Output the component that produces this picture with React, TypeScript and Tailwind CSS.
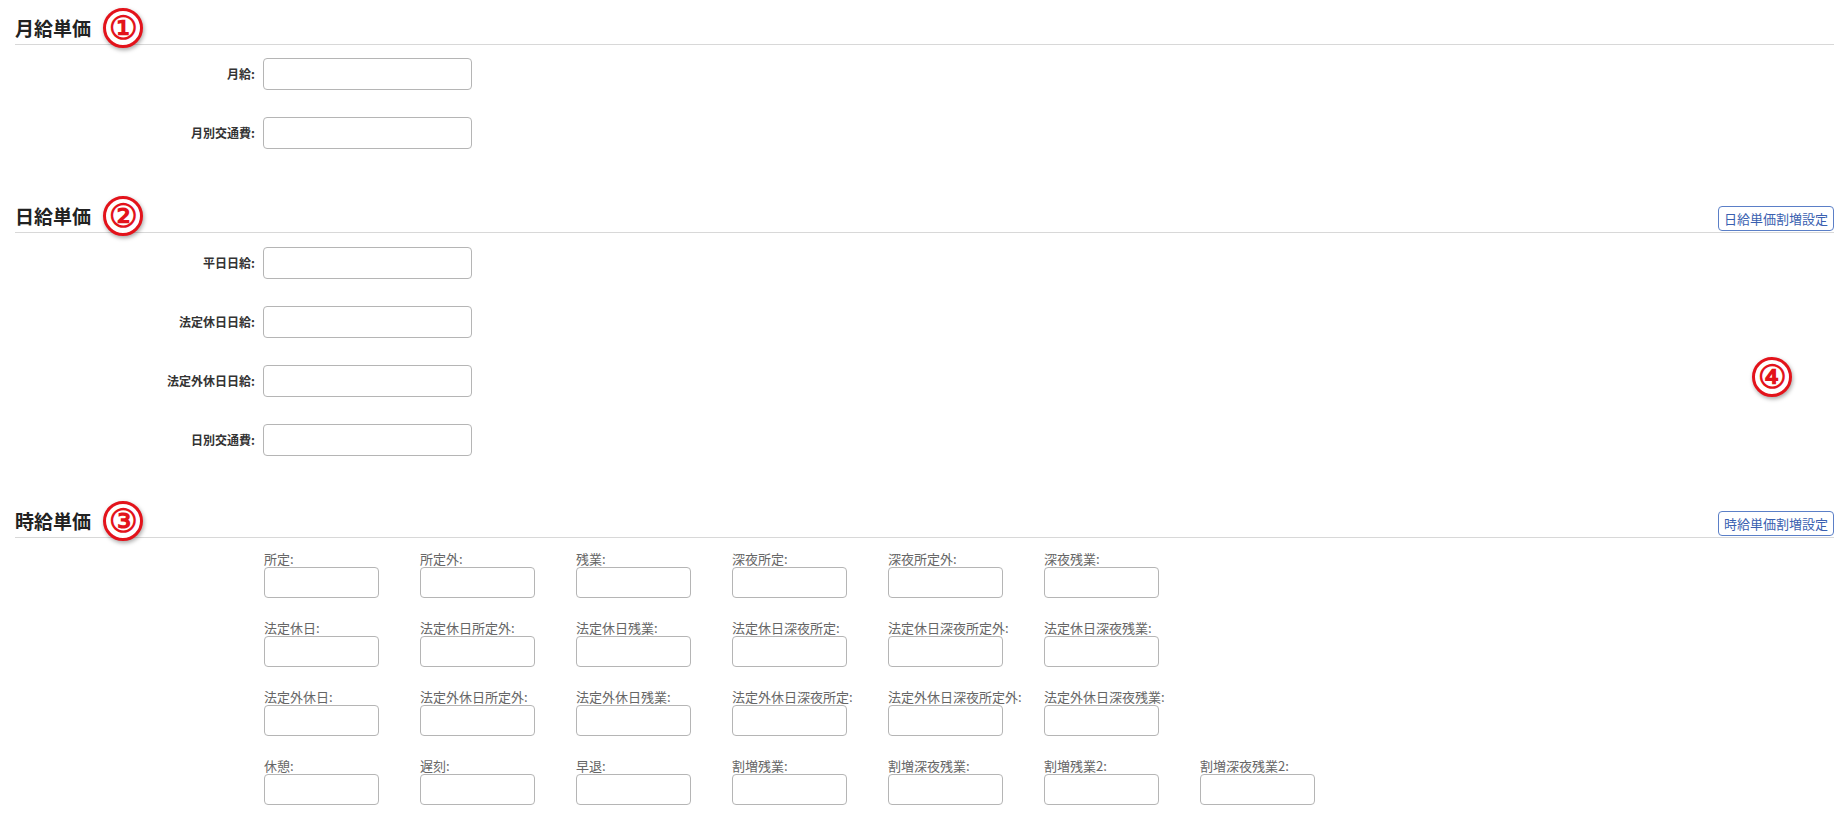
import React from "react";

const font = { fontFamily: '"Noto Sans CJK JP", "Noto Sans", sans-serif' };

function Badge({ n, className }: { n: string; className: string }) {
  return (
    <div
      className={`absolute w-[40px] h-[40px] rounded-full bg-white border-[3px] border-[#e3131b] flex items-center justify-center text-[#e3131b] text-[32px] font-bold leading-none shadow-[1px_2px_4px_rgba(0,0,0,0.35)] ${className}`}
      style={{ fontFamily: '"Liberation Sans", sans-serif' }}
    >
      {n}
    </div>
  );
}

function Header({ title, badge, button }: { title: string; badge: string; button?: string }) {
  return (
    <div className="relative flex items-end justify-between border-b border-[#d8d8d8] h-[45px] pb-[4px]">
      <div className="relative text-[19px] font-bold text-[#222] leading-[24px]">
        {title}
        <Badge n={badge} className="left-[88px] -top-[8px]" />
      </div>
      {button && (
        <button className="mb-[-3px] px-[5px] h-[25px] border border-[#5b7fc7] rounded-[4px] text-[13px] text-[#3a5fb0] bg-white leading-none">
          {button}
        </button>
      )}
    </div>
  );
}

function Row({ label }: { label: string }) {
  return (
    <div className="flex items-center h-[32px] mb-[27px]">
      <div className="w-[248px] text-right text-[12px] font-bold text-[#333] pr-[8px]">{label}</div>
      <input className="w-[209px] h-[32px] border border-[#b5b5b5] rounded-[4px] bg-white" />
    </div>
  );
}

const hourly = [
  ["所定:", "所定外:", "残業:", "深夜所定:", "深夜所定外:", "深夜残業:"],
  ["法定休日:", "法定休日所定外:", "法定休日残業:", "法定休日深夜所定:", "法定休日深夜所定外:", "法定休日深夜残業:"],
  ["法定外休日:", "法定外休日所定外:", "法定外休日残業:", "法定外休日深夜所定:", "法定外休日深夜所定外:", "法定外休日深夜残業:"],
  ["休憩:", "遅刻:", "早退:", "割増残業:", "割増深夜残業:", "割増残業2:", "割増深夜残業2:"],
];

export default function App() {
  return (
    <div className="relative w-[1844px] h-[820px] bg-white overflow-hidden pl-[15px] pr-[10px]" style={font}>
      <Header title="月給単価" badge="①" />
      <div className="mt-[13px]">
        <Row label="月給:" />
        <Row label="月別交通費:" />
      </div>
      <div className="h-[12px]" />
      <Header title="日給単価" badge="②" button="日給単価割増設定" />
      <div className="mt-[14px]">
        <Row label="平日日給:" />
        <Row label="法定休日日給:" />
        <Row label="法定外休日日給:" />
        <Row label="日別交通費:" />
      </div>
      <div className="h-[10px]" />
      <Header title="時給単価" badge="③" button="時給単価割増設定" />
      <div className="mt-[12px] pl-[249px]">
        {hourly.map((row, i) => (
          <div key={i} className="flex h-[69px]">
            {row.map((l) => (
              <div key={l} className="w-[156px] shrink-0">
                <div className="h-[17px] text-[13px] leading-[17px] text-[#666] whitespace-nowrap">{l}</div>
                <input className="w-[115px] h-[31px] border border-[#b5b5b5] rounded-[4px] bg-white" />
              </div>
            ))}
          </div>
        ))}
      </div>
      <Badge n="④" className="left-[1752px] top-[357px]" />
    </div>
  );
}
